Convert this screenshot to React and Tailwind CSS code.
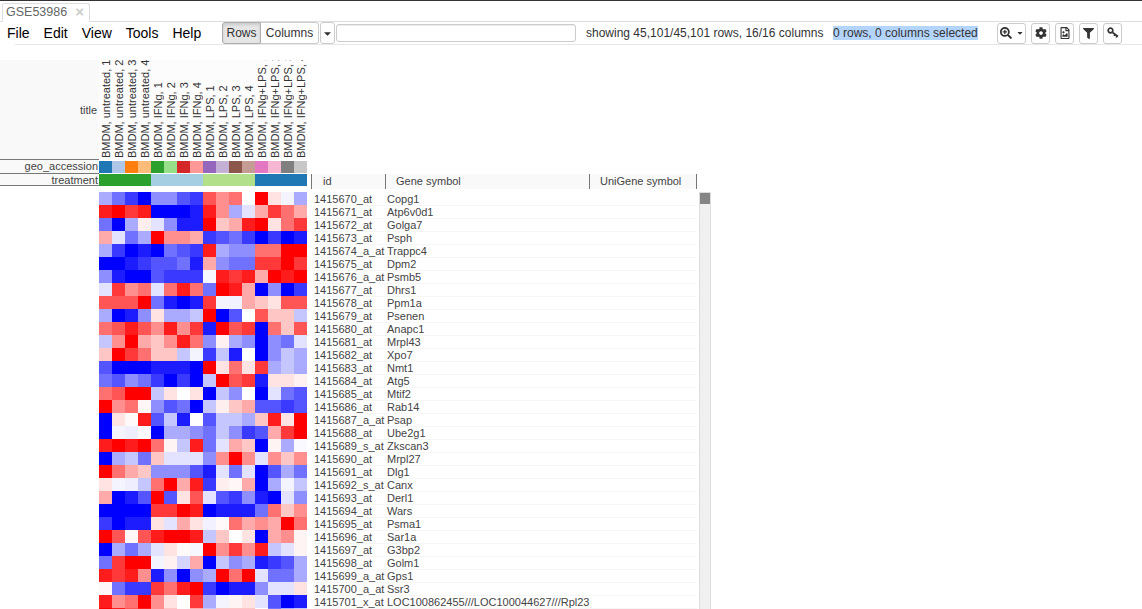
import { FaSearchPlus, FaCog, FaRegFileImage, FaFilter, FaCaretDown } from "react-icons/fa";

const titles = [
	"BMDM, untreated, 1", "BMDM, untreated, 2", "BMDM, untreated, 3", "BMDM, untreated, 4",
	"BMDM, IFNg, 1", "BMDM, IFNg, 2", "BMDM, IFNg, 3", "BMDM, IFNg, 4",
	"BMDM, LPS, 1", "BMDM, LPS, 2", "BMDM, LPS, 3", "BMDM, LPS, 4",
	"BMDM, IFNg+LPS, 1", "BMDM, IFNg+LPS, 2", "BMDM, IFNg+LPS, 3", "BMDM, IFNg+LPS, 4",
];

const geo = ["#1f77b4", "#aec7e8", "#ff7f0e", "#ffbb78", "#2ca02c", "#98df8a", "#d62728", "#ff9896", "#9467bd", "#c5b0d5", "#8c564b", "#c49c94", "#e377c2", "#f7b6d2", "#7f7f7f", "#c7c7c7"];

const rows = [
	["1415670_at", "Copg1"], ["1415671_at", "Atp6v0d1"], ["1415672_at", "Golga7"], ["1415673_at", "Psph"],
	["1415674_a_at", "Trappc4"], ["1415675_at", "Dpm2"], ["1415676_a_at", "Psmb5"], ["1415677_at", "Dhrs1"],
	["1415678_at", "Ppm1a"], ["1415679_at", "Psenen"], ["1415680_at", "Anapc1"], ["1415681_at", "Mrpl43"],
	["1415682_at", "Xpo7"], ["1415683_at", "Nmt1"], ["1415684_at", "Atg5"], ["1415685_at", "Mtif2"],
	["1415686_at", "Rab14"], ["1415687_a_at", "Psap"], ["1415688_at", "Ube2g1"], ["1415689_s_at", "Zkscan3"],
	["1415690_at", "Mrpl27"], ["1415691_at", "Dlg1"], ["1415692_s_at", "Canx"], ["1415693_at", "Derl1"],
	["1415694_at", "Wars"], ["1415695_at", "Psma1"], ["1415696_at", "Sar1a"], ["1415697_at", "G3bp2"],
	["1415698_at", "Golm1"], ["1415699_a_at", "Gps1"], ["1415700_a_at", "Ssr3"], ["1415701_x_at", "LOC100862455///LOC100044627///Rpl23"],
];

// -9 full blue .. 9 full red
const heat = [
	[-3, -5, -7, -9, -4, -4, -6, -7, 6, 4, 5, 0, 9, 1, -0.4, -3],
	[8, 9, 7, 8, -9, -9, -9, -8, 8, 4, -3, -1, 3, 7, 5, 3],
	[-5, -9, -3, 0.6, -1, -4, -8, -8, 9, 2, 3, 8, 9, 1, 5, 7],
	[3, -1, -5, -3, 9, 4, 4, 3, -7, -6, -5, -7, -9, -7, -9, -8],
	[-3, -7, -9, -8, -9, -5, -6, -7, 8, -3, -4, -4, 5, 5, 9, 9],
	[-9, -9, -8, -7, -6, -6, -5, -8, 3, -4, -5, -5, 7, 7, 9, 7],
	[-4, -8, -9, -9, -6, -7, -7, -7, -0.3, 8, 7, 8, 3, 9, 8, 9],
	[-1, 7, 4, 5, -1, 5, 8, 5, -5, 9, 8, 3, -9, -4, -9, -7],
	[6, 6, 6, 9, -5, -8, -9, -8, 7, -0.4, -0.5, 3, 2, 1, 6, 6],
	[-3, -9, -8, -4, 1, -3, -3, -2, 9, -9, -6, 0, 6, 2, 2, -2],
	[5, 6, 8, 6, 4, 8, 4, 7, -8, 9, 6, 7, -9, 5, 2, 6],
	[-2, 4, 9, 3, 2, 4, 8, 5, -4, 0.5, -3, -4, -9, -4, -5, -1],
	[2, 9, 7, 5, 2, 2, -2, -0.4, -7, -2, -8, 0, -9, -4, -2, -3],
	[-6, -9, -9, -9, -8, -8, -8, -9, 9, 1, 5, 1, 7, -3, -2, -3],
	[-5, -6, -4, -5, -7, -9, -7, -9, -2, 9, 6, 7, -8, 1, 1, 0.5],
	[5, 6, 9, 9, -2, 1, 0, 1, -9, -2, -4, 0, -9, -1, -5, -6],
	[9, 4, 5, 0.3, -4, -6, -5, -9, -2, 0.6, 2, 3, -6, -6, -7, -6],
	[-9, 1, 0.2, 8, -6, -2, -8, 0, -6, -2, -2, -3, 2, 8, 1, 9],
	[-9, -0.4, -0.6, -0.2, -9, -3, -3, -4, -5, -2, -4, -7, -6, 3, 7, 9],
	[8, 9, 8, 9, 5, 0.4, -2, 8, -5, -1, 3, 2, -9, 0.4, -3, -0.2],
	[-9, -3, -2, -5, 2, -1, -1, -1, -4, 4, 9, 4, -1, 4, 2, 4],
	[9, 5, 3, 2, -4, -4, -4, -6, -8, -1, -5, -1, -9, -6, -3, -5],
	[1, -0.4, -0.6, -2, 5, 9, 3, 8, -7, 0.6, 0.3, 3, -9, -3, -0.4, -2],
	[3, -9, -8, -6, 9, -6, 1, 6, -1, -6, -7, -4, -8, -9, -1, -4],
	[-9, -9, -9, -9, 7, 7, 9, 8, -9, -8, -8, -8, -5, 5, 2, 4],
	[-7, -9, -8, -8, 1, -1, 3, 1, -0.5, 0.2, 5, 3, 4, 3, 9, 5],
	[9, 6, 0.3, 6, 8, 9, 9, 8, -2, 2, 0, 1, -9, 3, 4, 0.4],
	[-9, -3, -5, -3, -1, 1, 0.2, -0.3, 9, 4, 7, 4, 8, -2, -1, 0.4],
	[-5, 7, 9, 9, -0.4, 0.5, -1.5, 3, -9, -2, -4, -3, -8, -7, -6, -3],
	[8, 7, 8, 4, -8, -4, -9, -4, -3, 9, 5, 9, -1, -5, -5, -3],
	[0.3, -5, -7, -7, 7, 5, 8, 9, -7, -9, -8, -8, -4, -1, -1, 1],
	[8, 4, 5, 9, 4, 1, 0, 7, -3, -0.4, 0.4, 1, -1, -6, -9, -8],
	[9, 8, 6, 8, 4, 2, 0, 3, -2, 2, 2, 2, 0, -5, -3, -2],
];

const heatColor = (v) => {
	const c = Math.round(255 * (1 - Math.abs(v) / 9));
	return v >= 0 ? `rgb(255,${c},${c})` : `rgb(${c},${c},255)`;
};

const IconBtn = ({ children, className = "w-[19px]" }) => (
	<button className={`flex h-[21px] items-center justify-center gap-[4px] rounded-[3px] border border-[#ccc] bg-white text-[11px] text-[#333] ${className}`}>
		{children}
	</button>
);

const KeyIcon = () => (
	<svg width="12" height="12" viewBox="0 0 12 12" fill="none" stroke="#333">
		<circle cx="3.5" cy="3.5" r="2.3" strokeWidth="1.7" />
		<path d="M5.5 5.5 L11 9.5 M8 7.3 L7.2 9 M10 8.8 L9.2 10.5" strokeWidth="1.6" />
	</svg>
);

const Toolbar = () => (
	<div className="flex h-[23px] items-center border-b border-[#e7e7e7] ml-[15px]">
		<div className="flex gap-[14px] -ml-[8px] w-[215px] text-[14px] leading-[20px] text-black">
			<span>File</span>
			<span>Edit</span>
			<span>View</span>
			<span>Tools</span>
			<span>Help</span>
		</div>
		<div className="flex h-[22px] text-[12px] text-[#333]">
			<div className="flex w-[39px] items-center justify-center rounded-l-[3px] border border-[#adadad] bg-[#e6e6e6] shadow-[inset_0_2px_3px_rgba(0,0,0,0.12)]">Rows</div>
			<div className="flex w-[58px] items-center justify-center rounded-r-[3px] border border-l-0 border-[#ccc] bg-white">Columns</div>
		</div>
		<div className="ml-[1px] flex h-[22px] w-[15px] items-center justify-center rounded-[3px] border border-[#ccc] bg-white text-[#333]">
			<FaCaretDown size={11} />
		</div>
		<div className="ml-[1px] h-[18px] w-[240px] rounded-[3px] border border-[#ccc] bg-white shadow-[inset_0_1px_1px_rgba(0,0,0,0.08)]" />
		<span className="ml-[10px] w-[247px] text-[12px] text-[#333]">showing 45,101/45,101 rows, 16/16 columns</span>
		<span className="w-[164px] text-[12px] text-[#333]"><span className="bg-[#b3d4fc]">0 rows, 0 columns selected</span></span>
		<div className="flex items-center gap-[5px]">
			<IconBtn className="w-[29px]">
				<FaSearchPlus size={12} />
				<FaCaretDown size={8} />
			</IconBtn>
			<IconBtn><FaCog size={12} /></IconBtn>
			<IconBtn><FaRegFileImage size={12} /></IconBtn>
			<IconBtn><FaFilter size={11} /></IconBtn>
			<IconBtn><KeyIcon /></IconBtn>
		</div>
	</div>
);

const HeatmapPanel = () => (
	<div className="w-[311px] shrink-0 text-[11px] text-[#444]">
		<div className="flex h-[100px]">
			<div className="flex w-[99px] items-center justify-end border-b border-[#777] bg-[#f9f9f9] pr-[2px] pt-[2px]">title</div>
			{titles.map((t) => (
				<div key={t} className="h-[99px] w-[13px] overflow-hidden whitespace-nowrap bg-[#fcfcfc] pt-[1px] pr-[1px] leading-[13px] text-[#333] [writing-mode:vertical-rl] rotate-180">
					{t}
				</div>
			))}
		</div>
		<div className="flex h-[14px]">
			<div className="w-[99px] border-b border-[#777] bg-[#f9f9f9] pr-[1px] text-right leading-[13px]">geo_accession</div>
			{geo.map((c) => (
				<div key={c} className="mt-[1px] h-[12px] w-[13px]" style={{ backgroundColor: c }} />
			))}
		</div>
		<div className="flex h-[12px]">
			<div className="w-[99px] shrink-0 border-b border-[#777] bg-[#f9f9f9] pr-[1px] text-right leading-[12px]">treatment</div>
			<div className="h-[12px] w-[52px] shrink-0 bg-[#2ca02c]" />
			<div className="h-[12px] w-[52px] shrink-0 bg-[#a6cee3]" />
			<div className="h-[12px] w-[52px] shrink-0 bg-[#b2df8a]" />
			<div className="h-[12px] w-[52px] shrink-0 bg-[#1f78b4]" />
		</div>
		<div className="ml-[99px] mt-[6px]">
			{heat.map((r, i) => (
				<div key={i} className="flex h-[13px]">
					{r.map((v, j) => (
						<div key={j} className="h-[13px] w-[13px]" style={{ backgroundColor: heatColor(v) }} />
					))}
				</div>
			))}
		</div>
	</div>
);

const TablePanel = () => (
	<div className="flex-1 pt-[114px] text-[11px] text-[#444]">
		<div className="flex h-[15px] w-[386px] bg-[#f9f9f9] leading-[15px]">
			<div className="w-[74px] border-l border-[#777] pl-[11px]">id</div>
			<div className="w-[204px] border-l border-[#777] pl-[10px]">Gene symbol</div>
			<div className="w-[108px] border-x border-[#777] pl-[10px]">UniGene symbol</div>
		</div>
		<div className="mt-[3px] flex">
			<div className="w-[386px] pl-[3px] pt-[1px]">
				{rows.map(([id, gene]) => (
					<div key={id} className="flex h-[13px] border-b border-[#f6f6f6] leading-[13px]">
						<div className="w-[73px] shrink-0 whitespace-nowrap">{id}</div>
						<div className="whitespace-nowrap">{gene}</div>
					</div>
				))}
			</div>
			<div className="ml-[2px] h-[420px] w-[12px] border border-[#ddd] bg-[#f0f0f0]">
				<div className="h-[11px] bg-[#858585]" />
			</div>
		</div>
	</div>
);

export default function App() {
	return (
		<div className="h-[609px] w-[1142px] overflow-hidden bg-white font-['Liberation_Sans',Arial,sans-serif]">
			<div className="h-[1px] bg-[#333]" />
			<div className="flex h-[21px] border-b border-[#ddd] pl-[2px] pt-[2px]">
				<div className="flex h-[19px] w-[88px] items-center rounded-t-[3px] border border-b-white border-[#ddd] bg-white pl-[3px] text-[12.5px] text-[#666]">
					GSE53986
					<span className="ml-[8px] text-[15px] font-bold text-[#ccc]">×</span>
				</div>
			</div>
			<Toolbar />
			<div className="flex pt-[15px]">
				<HeatmapPanel />
				<TablePanel />
			</div>
		</div>
	);
}
